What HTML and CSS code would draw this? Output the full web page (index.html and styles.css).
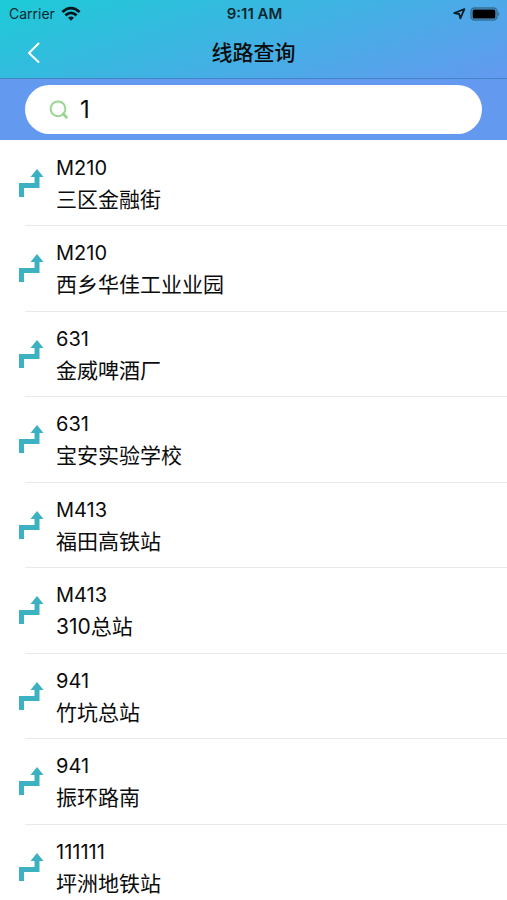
FILE: index.html
```html
<!DOCTYPE html>
<html lang="zh-CN">
<head>
<meta charset="utf-8">
<meta name="viewport" content="width=device-width, initial-scale=1">
<title>线路查询</title>
<link rel="stylesheet" href="styles.css">
</head>
<body>
<svg class="sprite" aria-hidden="true">
  <symbol id="route" viewBox="0 0 26 30">
    <path d="M3.5 29V17.5H19V8" fill="none" stroke="currentColor" stroke-width="5"/>
    <path d="M19 1L25.5 9H12.5Z" fill="currentColor"/>
  </symbol>
</svg>
<header class="header">
  <div class="status">
    <div class="carrier">
      <span>Carrier</span>
      <svg width="20" height="15" viewBox="0 0 20 15" aria-hidden="true">
        <g fill="none" stroke="#06181f" stroke-width="2.8">
          <path d="M1.4 6Q10 -1.8 18.6 6"/>
          <path d="M4.4 9.4Q10 4.4 15.6 9.4"/>
        </g>
        <path d="M7 11.8Q10 9.2 13 11.8L10 14.8Z" fill="#06181f"/>
      </svg>
    </div>
    <span class="time">9:11 AM</span>
    <div class="power">
      <svg width="13" height="12" viewBox="0 0 13 12" aria-hidden="true">
        <path d="M1.2 5L11.4 1.2L7.4 10.4L6.2 6Z" fill="none" stroke="#08202c" stroke-width="1.8" stroke-linejoin="round"/>
      </svg>
      <svg width="30" height="14" viewBox="0 0 30 14" aria-hidden="true">
        <rect x="1" y="1" width="26" height="12" rx="3.5" fill="none" stroke="#356f93" stroke-width="1.5"/>
        <rect x="2.6" y="2.6" width="22.8" height="8.8" rx="1.5" fill="#000"/>
        <path d="M28 4.8Q30.5 7 28 9.2Z" fill="#356f93"/>
      </svg>
    </div>
  </div>
  <nav class="nav">
    <button class="back" type="button" aria-label="返回">
      <svg width="14" height="22" viewBox="0 0 14 22" aria-hidden="true">
        <path d="M11.5 1.5L2 11L11.5 20" fill="none" stroke="#fff" stroke-width="2" stroke-linecap="round" stroke-linejoin="round"/>
      </svg>
    </button>
    <h1 class="title">线路查询</h1>
  </nav>
</header>
<form class="search">
  <label class="field">
    <svg width="20" height="20" viewBox="0 0 20 20" aria-hidden="true">
      <circle cx="9" cy="8.8" r="7.4" fill="none" stroke="#9bd592" stroke-width="2"/>
      <path d="M14.2 14L17.4 17.2" stroke="#9bd592" stroke-width="3" stroke-linecap="round"/>
    </svg>
    <input type="text" value="1" aria-label="线路">
  </label>
</form>
<ul class="list">
  <li class="row"><svg class="icon"><use href="#route"/></svg><div class="text"><p>M210</p><p class="stop">三区金融街</p></div></li>
  <li class="row"><svg class="icon"><use href="#route"/></svg><div class="text"><p>M210</p><p class="stop">西乡华佳工业业园</p></div></li>
  <li class="row"><svg class="icon"><use href="#route"/></svg><div class="text"><p>631</p><p class="stop">金威啤酒厂</p></div></li>
  <li class="row"><svg class="icon"><use href="#route"/></svg><div class="text"><p>631</p><p class="stop">宝安实验学校</p></div></li>
  <li class="row"><svg class="icon"><use href="#route"/></svg><div class="text"><p>M413</p><p class="stop">福田高铁站</p></div></li>
  <li class="row"><svg class="icon"><use href="#route"/></svg><div class="text"><p>M413</p><p class="stop">310总站</p></div></li>
  <li class="row"><svg class="icon"><use href="#route"/></svg><div class="text"><p>941</p><p class="stop">竹坑总站</p></div></li>
  <li class="row"><svg class="icon"><use href="#route"/></svg><div class="text"><p>941</p><p class="stop">振环路南</p></div></li>
  <li class="row"><svg class="icon"><use href="#route"/></svg><div class="text"><p>111111</p><p class="stop">坪洲地铁站</p></div></li>
</ul>
</body>
</html>
```
FILE: styles.css
```css
* {
  box-sizing: border-box;
  margin: 0;
  padding: 0;
}

body {
  background: #fff;
  color: #0c0c0c;
  font-family: Inter, "Noto Sans CJK SC", sans-serif;
  font-size: 20px;
  overflow: hidden;
}

.sprite {
  display: none;
}

svg {
  display: block;
  flex: none;
}

.header {
  height: 79px;
  background: linear-gradient(161deg, #1ccbd6, #6499f0);
  border-bottom: 1px solid #4384c2;
}

.status {
  display: grid;
  grid-template-columns: 1fr auto 1fr;
  align-items: center;
  height: 27px;
  padding: 0 7px 0 9px;
  font-size: 14px;
  color: #0b2730;
}

.carrier,
.power {
  display: flex;
  align-items: center;
  gap: 6px;
}

.power {
  justify-content: flex-end;
  gap: 4px;
}

.time {
  font-size: 15px;
  font-weight: 600;
}

.nav {
  display: grid;
  grid-template-columns: 1fr auto 1fr;
  align-items: center;
  height: 51px;
}

.back {
  justify-self: start;
  padding: 8px 27px;
  background: none;
  border: 0;
}

.title {
  font-size: 21px;
  line-height: 32px;
  font-weight: 500;
}

.search {
  padding: 6px 25px;
  background: #6499f0;
}

.field {
  display: flex;
  align-items: center;
  gap: 11px;
  height: 49px;
  padding: 0 24px;
  border-radius: 25px;
  background: #fff;
}

.field input {
  flex: 1;
  min-width: 0;
  border: 0;
  outline: 0;
  background: none;
  color: #0c0c0c;
  font: inherit;
  font-size: 24px;
}

.list {
  list-style: none;
}

.row {
  display: flex;
  height: 85px;
  padding-left: 18px;
}

.row:nth-child(even) {
  height: 86px;
}

.icon {
  width: 26px;
  height: 30px;
  margin-top: 28px;
  color: #3cb1c2;
}

.text {
  flex: 1;
  padding: 12px 0 0 12px;
  line-height: 32px;
}

.row + .row {
  background: linear-gradient(#e9e9e9, #e9e9e9) 25px 0 / 100% 1px no-repeat;
}

.stop {
  font-size: 21px;
}
```
